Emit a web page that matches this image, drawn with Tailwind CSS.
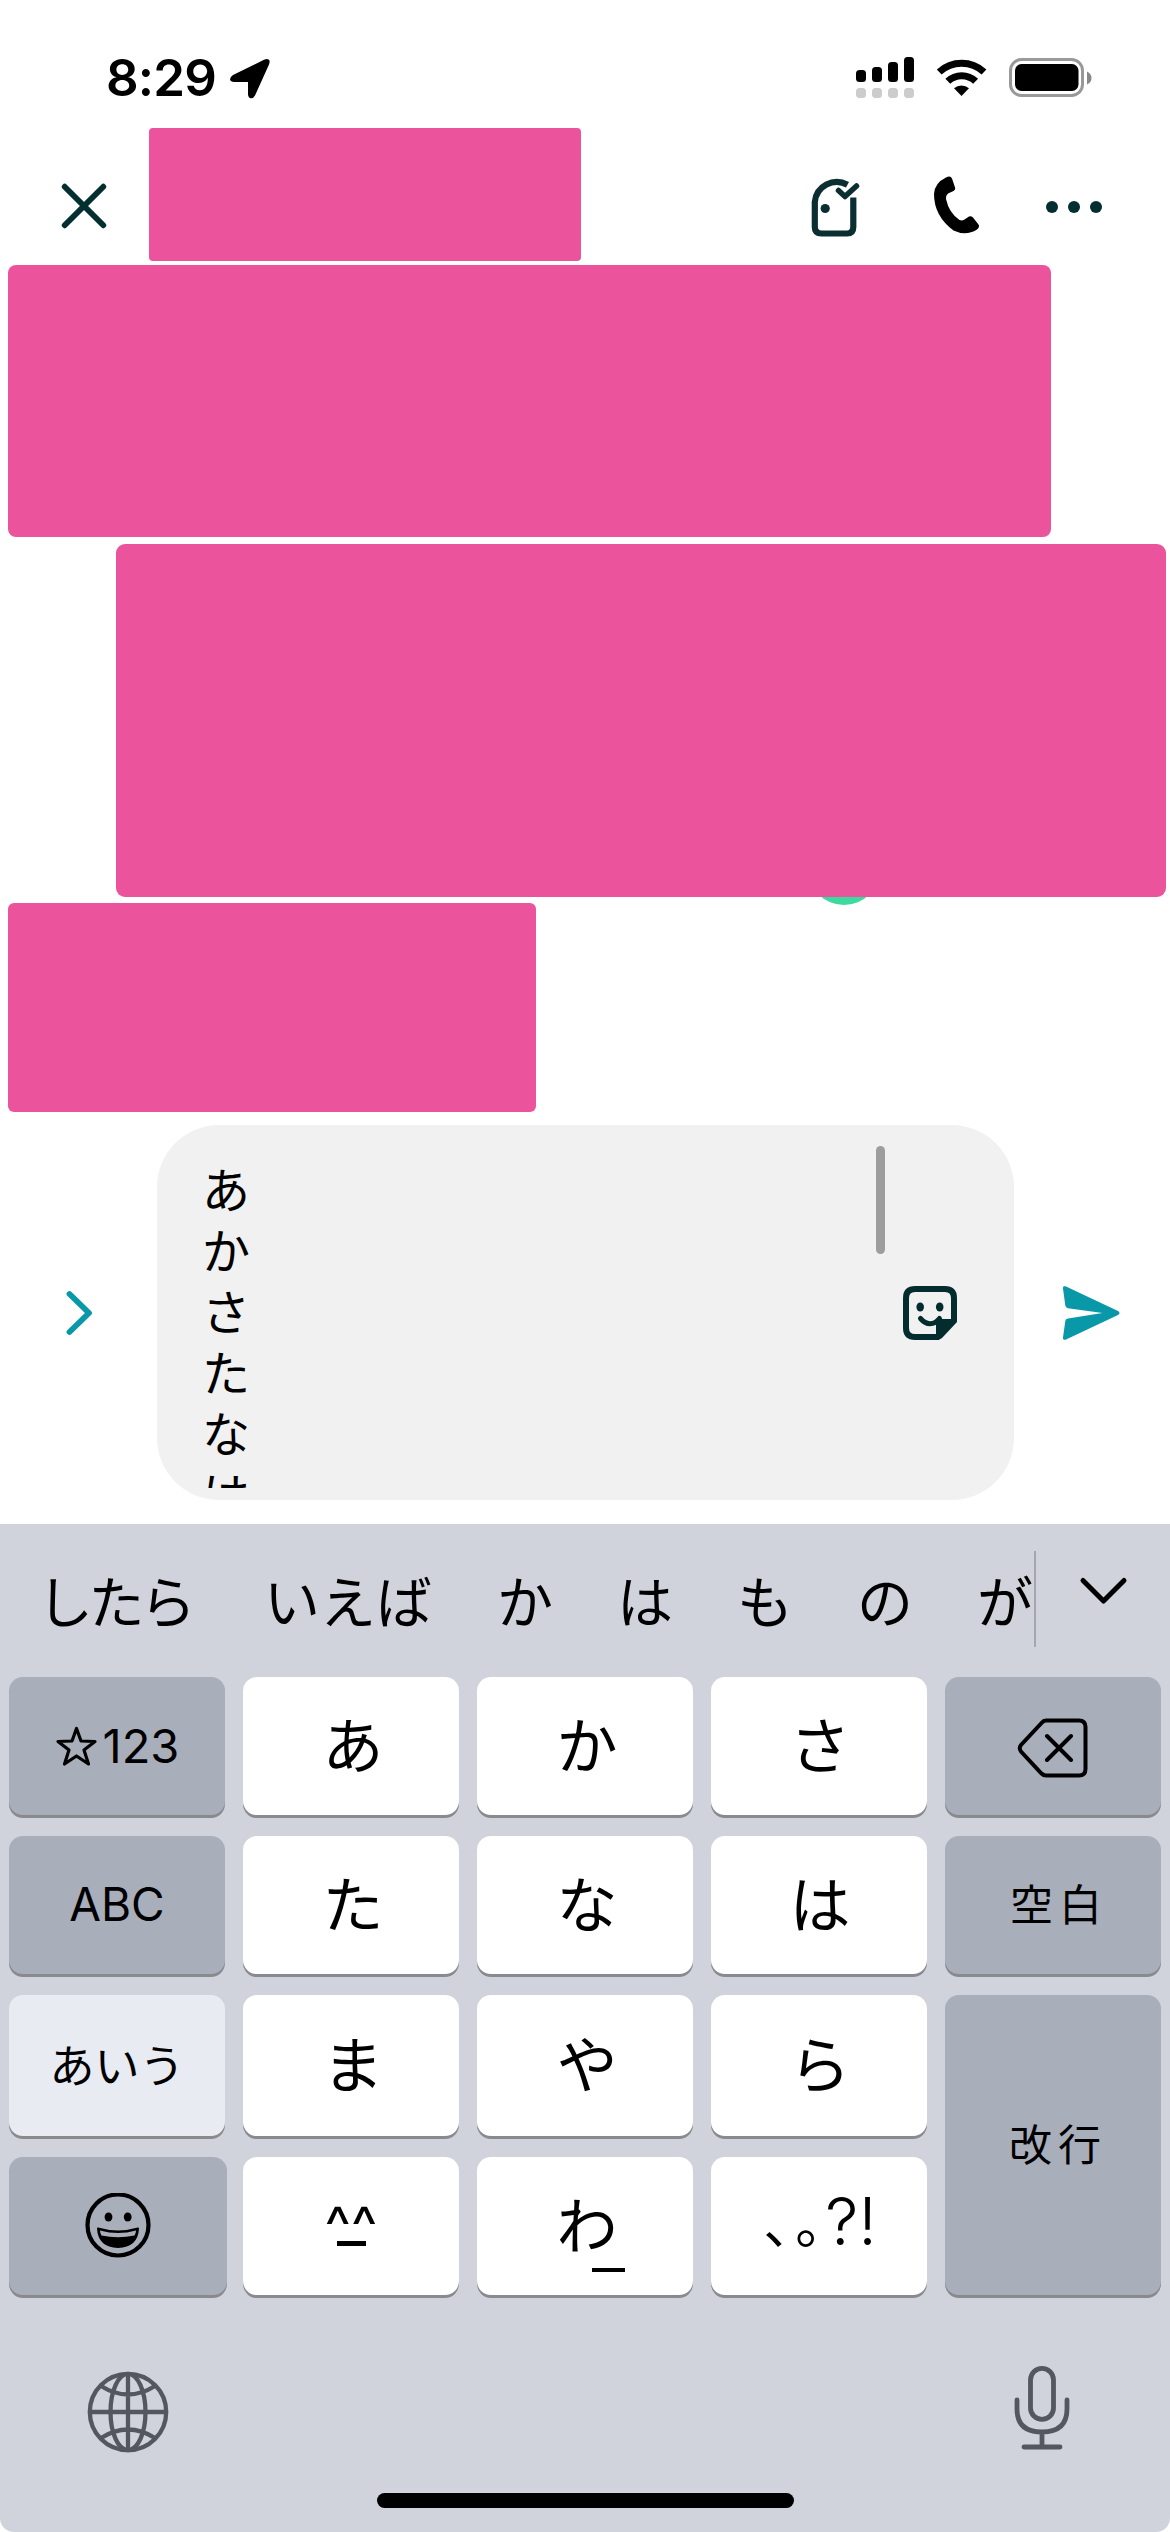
<!DOCTYPE html>
<html lang="ja">
<head>
<meta charset="utf-8">
<title>トーク</title>
<script src="https://cdn.jsdelivr.net/npm/@tailwindcss/browser@4"></script>
</head>
<body class="bg-white">
<div class="flex h-[2532px] w-[1170px] flex-col overflow-hidden bg-white font-['Noto_Sans_CJK_JP',sans-serif] text-black">

  <!-- Status bar -->
  <div class="flex h-[128px] shrink-0 items-start justify-between pt-[52px] pr-[78px] pl-[106px]">
    <div class="flex items-start gap-[14px]">
      <span class="font-['Inter',sans-serif] text-[51px] leading-[52px] font-semibold tracking-[-0.8px]">8:29</span>
      <svg class="mt-[7px] h-[40px] w-[40px]" viewBox="0 0 40 40"><path d="M34 .8 L3 16 Q0 18 0 20.500 Q.5 22.800 4 23 L18 23 L18 35.500 Q18.300 39 21 39.300 Q23.500 39.300 25 36.500 L39 5.500 Q40.500 1.500 38.500 .5 Q37 -.5 34 .8Z"/></svg>
    </div>
    <svg class="mt-[4px] h-[44px] w-[236px]" viewBox="856 56 236 44">
      <rect x="856" y="70" width="10" height="12" rx="3.5"/><rect x="872" y="67" width="10" height="15" rx="3.5"/><rect x="888" y="62" width="10" height="20" rx="3.5"/><rect x="904" y="57" width="10" height="25" rx="3.5"/>
      <g fill="#ccc"><rect x="856" y="88" width="10" height="10" rx="3.5"/><rect x="872" y="88" width="10" height="10" rx="3.5"/><rect x="888" y="88" width="10" height="10" rx="3.5"/><rect x="904" y="88" width="10" height="10" rx="3.5"/></g>
      <g fill="none" stroke="#000" stroke-width="7"><path d="M939.2 72 A33 33 0 0 1 984 72"/><path d="M947.8 81.300 A20 20 0 0 1 975.600 81.300"/></g>
      <path d="M961.500 96 L954 88.300 A11.500 11.500 0 0 1 969 88.300Z"/>
      <rect x="1010.500" y="59.500" width="72" height="36" rx="11" fill="none" stroke="#999" stroke-width="3"/>
      <rect x="1015" y="64" width="63.500" height="27" rx="6.500"/>
      <path d="M1087 71.500 Q1091.500 73.500 1091.500 78 T1087 84.500Z" fill="#888"/>
    </svg>
  </div>

  <!-- Chat header -->
  <div class="flex h-[133px] shrink-0 items-start pr-[66px] pl-[61px]">
    <svg class="mt-[55px] h-[46px] w-[46px]" viewBox="61 183 46 46"><path d="M64.700 186.700 L103.300 225.300 M103.300 186.700 L64.700 225.300" stroke="#032f30" stroke-width="5.800" stroke-linecap="round"/></svg>
    <div class="ml-[42px] h-[133px] w-[432px] rounded-[4px] bg-[#ec539d]"></div>
    <svg class="mt-[46px] ml-auto h-[66px] w-[294px]" viewBox="810 174 294 66">
      <g fill="none" stroke="#0b2e31" stroke-width="6.200" stroke-linejoin="round">
        <path d="M847.500 184.800 A22 22 0 0 0 814.800 202 V227 Q814.800 233.500 821.500 233.500 H847 Q853.300 233.500 853.300 227 V197.500"/>
        <path d="M838.500 190.500 L845 196.500 L856.500 186" stroke-width="5.500" stroke-linecap="round"/>
      </g>
      <circle cx="825.200" cy="208.500" r="4.600" fill="#0b2e31"/>
      <path d="M946 177.500 Q950.500 175 952 178.500 L955.200 188 Q955.500 190 953.500 191 L948 193.500 Q946 195 946 199 Q949 213 959.500 220 Q962 221 964.500 219.500 L969 216.500 Q971 215.500 973 217.500 L978.500 224.500 Q980 227 977 229.500 Q966 236.500 953.500 230.500 Q934 216 934 194 Q934.500 183 946 177.500Z"/>
      <g fill="#032f30"><circle cx="1052" cy="207" r="6"/><circle cx="1074" cy="207" r="6"/><circle cx="1096" cy="207" r="6"/></g>
    </svg>
  </div>

  <!-- Messages -->
  <div class="relative flex h-[864px] shrink-0 flex-col pt-[4px] pr-[4px] pl-[8px]">
    <div class="absolute top-[572px] left-[808px] h-[72px] w-[72px] rounded-full bg-[#3ddaa0]"></div>
    <div class="h-[272px] w-[1043px] rounded-[8px] bg-[#ec539d]"></div>
    <div class="relative mt-[7px] h-[353px] w-[1050px] self-end rounded-[9px] bg-[#ec539d]"></div>
    <div class="mt-[6px] h-[209px] w-[528px] rounded-[6px] bg-[#ec539d]"></div>
  </div>

  <!-- Composer -->
  <div class="flex h-[399px] shrink-0 items-center pb-[24px] pl-[66px]">
    <svg class="h-[48px] w-[28px]" viewBox="66 1289 28 48"><path d="M69.500 1294 L89 1313 L69.500 1332" fill="none" stroke="#0898a8" stroke-width="5.800" stroke-linecap="round" stroke-linejoin="round"/></svg>
    <div class="ml-[63px] flex h-[375px] w-[857px] items-start rounded-[62px] bg-[#f1f1f1] pl-[45px]">
      <div class="mt-[21px] h-[342px] w-[666px] overflow-hidden pt-[11px] text-[48px] leading-[61px]">あ<br>か<br>さ<br>た<br>な<br>は</div>
      <div class="mt-[21px] ml-[8px] h-[108px] w-[9px] rounded-full bg-[#9d9d9d]"></div>
      <svg class="mt-[161px] ml-[18px] h-[54px] w-[54px]" viewBox="0 0 54 54">
        <path d="M36 51 H12 Q3 51 3 42 V12 Q3 3 12 3 H42 Q51 3 51 12 V34" fill="none" stroke="#032c2e" stroke-width="6"/>
        <path d="M33 33 H54 V36 L39 52 Q37 54 33 54Z" fill="#032c2e"/>
        <ellipse cx="17.200" cy="21" rx="3.800" ry="4.500" fill="#032c2e"/><ellipse cx="36.700" cy="21" rx="3.800" ry="4.500" fill="#032c2e"/>
        <path d="M17.500 32.500 Q22 37.700 27 37.700 Q32.500 37.700 36.500 32.500" fill="none" stroke="#032c2e" stroke-width="5" stroke-linecap="round"/>
      </svg>
    </div>
    <svg class="ml-[49px] h-[56px] w-[57px]" viewBox="0 0 57 56"><path d="M2.500 1.300 L55 26 Q58 28 55 30 L2.500 54.700 Q-.3 55.500 0 52.500 L2.300 36 Q2.600 33.800 5 33.400 L39.500 28 L5 23.300 Q2.700 22.700 2.300 20.500 L0 3.500 Q-.3 .5 2.500 1.300Z" fill="#0898a8"/></svg>
  </div>

  <!-- Keyboard -->
  <div class="flex h-[1008px] shrink-0 flex-col rounded-b-[14px] bg-[#d0d3dc]">
    <div class="flex h-[153px] shrink-0 items-start">
      <div class="flex w-[1034px] gap-[64px] overflow-hidden pt-[45px] pl-[37px] text-[56px] leading-[60px] whitespace-nowrap">
        <span class="w-[163px] tracking-[-4.500px]">したら</span><span class="w-[169px]">いえば</span><span>か</span><span>は</span><span>も</span><span>の</span><span>が</span>
      </div>
      <div class="mt-[27px] h-[96px] w-[2px] bg-[#a4a7b0]"></div>
      <svg class="mt-[51px] ml-[43px] h-[32px] w-[50px]" viewBox="1078 1575 50 32"><path d="M1082 1580.500 L1102.500 1601 L1123 1580.500" fill="none" stroke="#000" stroke-width="5" stroke-linecap="round" stroke-linejoin="round"/></svg>
    </div>

    <div class="grid shrink-0 grid-cols-5 grid-rows-[138px_138px_141px_138px] gap-x-[18px] gap-y-[21px] px-[9px] text-[61px] leading-none *:flex *:items-center *:justify-center *:rounded-[14px] *:shadow-[0_3px_0_#898a8e]">
      <div class="gap-[5px] bg-[#a9aebb] pb-[1px] font-['Inter',sans-serif] text-[47px]">
        <svg class="h-[42px] w-[43px]" viewBox="0 0 43 42"><path d="M21.500 3.500 L26 16 L40 16.500 L29 25 L33.500 39 L21.500 31 L9.500 39 L14 25 L3 16.500 L17 16Z" fill="none" stroke="#000" stroke-width="3.200" stroke-linejoin="round"/></svg>
        <span>123</span>
      </div>
      <div class="bg-white pb-[8px] pl-[4px]">あ</div>
      <div class="bg-white pb-[8px] pl-[4px]">か</div>
      <div class="bg-white pb-[8px] pl-[2px]">さ</div>
      <div class="bg-[#a9aebb] pt-[4px]">
        <svg class="h-[60px] w-[72px]" viewBox="0 0 72 60"><path d="M29 2.500 H62 Q68.500 2.500 68.500 9 V51 Q68.500 57.500 62 57.500 H29 Q26.500 57.500 24.500 55.500 L4 33.500 Q1.500 30.200 4 27 L24.500 5 Q26.500 2.500 29 2.500Z M30 18 L54 42 M54 18 L30 42" fill="none" stroke="#000" stroke-width="4" stroke-linecap="round"/></svg>
      </div>

      <div class="bg-[#a9aebb] pb-[2px] font-['Inter',sans-serif] text-[46px]">ABC</div>
      <div class="bg-white pb-[8px] pl-[4px]">た</div>
      <div class="bg-white pb-[8px] pl-[4px]">な</div>
      <div class="bg-white pb-[8px] pl-[2px]">は</div>
      <div class="bg-[#a9aebb] pb-[5px] pl-[12px] text-[43px] tracking-[6px]">空白</div>

      <div class="bg-[#e8ebf1] pb-[5px] text-[45px]">あいう</div>
      <div class="bg-white pb-[9px] pl-[4px]">ま</div>
      <div class="bg-white pb-[9px] pl-[4px]">や</div>
      <div class="bg-white pb-[9px] pl-[2px]">ら</div>
      <div class="row-span-2 bg-[#a9aebb] pb-[5px] pl-[10px] text-[43px] tracking-[6px]">改行</div>

      <div class="w-[218px] bg-[#a9aebb]">
        <svg class="h-[66px] w-[66px]" viewBox="0 0 66 66">
          <circle cx="33" cy="32" r="30.500" fill="none" stroke="#000" stroke-width="4.200"/>
          <ellipse cx="23.500" cy="24" rx="3.900" ry="4.500"/><ellipse cx="42.700" cy="24" rx="3.900" ry="4.500"/>
          <path d="M13 35.500 Q33 41.500 53 35.500 Q52 53.500 33 54 Q14 53.500 13 35.500Z" stroke="#000" stroke-width="2" stroke-linejoin="round"/>
          <path d="M15 37.500 Q33 42.500 51 37.500 Q51 40 49.500 42.500 Q33 46 16.500 42.500 Q15 40 15 37.500Z" fill="#a9aebb"/>
        </svg>
      </div>
      <div class="flex-col bg-white pb-[9px] font-['Inter',sans-serif] text-[56px]"><span class="h-[43px]">^^</span><span class="h-[5px] w-[29px] bg-black"></span></div>
      <div class="relative bg-white pb-[8px] pl-[4px]">わ<span class="absolute top-[111px] left-[115px] h-[4px] w-[33px] bg-black"></span></div>
      <div class="bg-white pb-[10px] pl-[2px]"><span class="w-[32px] text-[54px]">、</span><span class="w-[30px] text-[54px]">。</span><span class="font-['Inter',sans-serif] text-[66px] font-light">?!</span></div>
    </div>

    <div class="flex grow items-start justify-between pt-[68px] pr-[98px] pl-[87px]">
      <svg class="mt-[8px] h-[82px] w-[82px]" viewBox="0 0 82 82" fill="none" stroke="#53575f" stroke-width="4.300"><circle cx="41" cy="41" r="38.200"/><ellipse cx="41" cy="41" rx="17.500" ry="38.200"/><path d="M41 3 V79 M3 41 H79 M14 15 Q41 32 68 15 M14 67 Q41 50 68 67"/></svg>
      <svg class="mt-[1px] h-[88px] w-[60px]" viewBox="0 0 60 88" fill="none" stroke="#53575f" stroke-width="4.800" stroke-linecap="round"><rect x="18.500" y="4.400" width="23" height="51" rx="11.500"/><path d="M5 36 V45 Q5 68 30 68 Q55 68 55 45 V36 M30 68 V83 M12 83 H48"/></svg>
    </div>
    <div class="mb-[24px] h-[15px] w-[417px] shrink-0 self-center rounded-full bg-black"></div>
  </div>
</div>
</body>
</html>
